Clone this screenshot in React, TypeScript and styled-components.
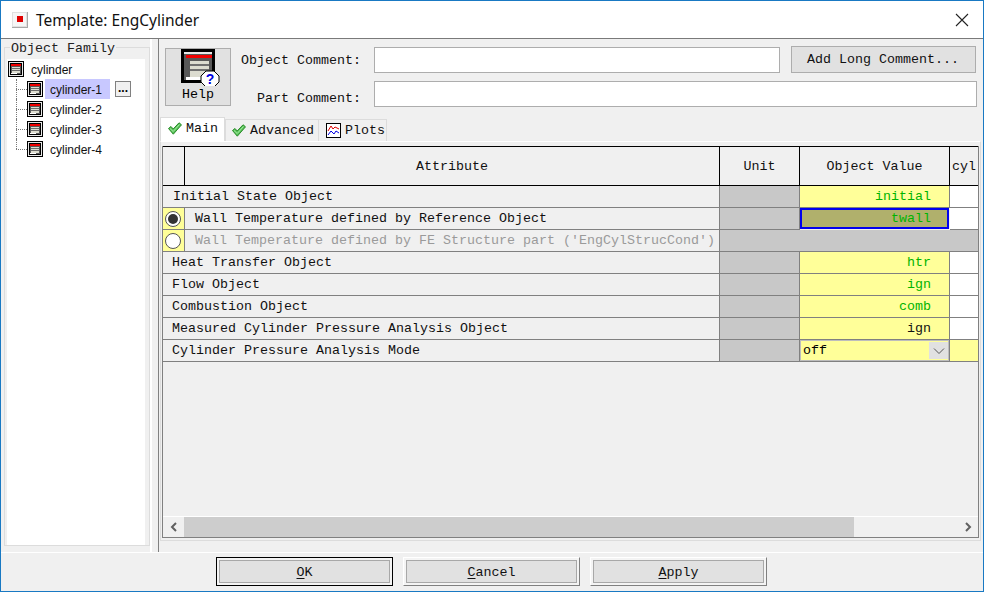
import React from "react";
import styled, { createGlobalStyle } from "styled-components";

const Global = createGlobalStyle`
  html, body { margin: 0; padding: 0; background: #f0f0f0; }
  * { box-sizing: border-box; }
`;

const MONO = `"Liberation Mono", "DejaVu Sans Mono", monospace`;
const UI = `"Noto Sans", "Open Sans", sans-serif`;

const Win = styled.div`
  width: 984px; height: 592px; border: 1px solid #1979c3;
  display: flex; flex-direction: column; background: #f0f0f0;
  font: 13.33px ${MONO}; color: #000; overflow: hidden;
`;
const TitleBar = styled.header`
  height: 38px; background: #fff; display: flex; align-items: center; padding: 0 14px 0 11px;
  border-bottom: 1px solid #7a7a7a; flex: none;
`;
const TitleText = styled.div`
  font: 15.5px ${UI}; margin-left: 8px; flex: 1; color: #111;
`;
const CloseBtn = styled.button`
  width: 14px; height: 14px; padding: 0; border: 0; background: none; display: block; margin-top: 1px;
`;
const Main = styled.div`
  flex: none; display: flex; height: 514px;
  border-bottom: 1px solid #fff;
`;
const Side = styled.aside`
  width: 151px; flex: none; padding: 4px 0 6px 3px; border-right: 2px solid #fff; display: flex;
`;
const Fieldset = styled.fieldset`
  margin: 0; flex: 1; border: 1px solid #dcdcdc; padding: 7px 3px 0 2px; min-width: 0; display: flex;
`;
const Legend = styled.legend`
  padding: 0 1px; margin-left: 3px; height: 9px; color: #222;
  font: 13.33px/11px ${MONO};
`;
const Tree = styled.div`
  flex: 1; background: #fff; margin-right: 1px;
`;
const TreeRow = styled.div<{ $child?: boolean; $last?: boolean }>`
  height: 20px; display: flex; align-items: center; position: relative;
  padding-left: ${p => (p.$child ? 20 : 1)}px;
  font: 12px "Liberation Sans", Arial, sans-serif; color: #111;
  ${p => p.$child && `
    &::before { content: ""; position: absolute; left: 9px; width: 11px; top: 10px; border-top: 1px dotted #777; }
    &::after { content: ""; position: absolute; left: 9px; top: 0; height: ${p.$last ? 10 : 20}px; border-left: 1px dotted #777; }
  `}
`;
const TreeLabel = styled.span<{ $selected?: boolean }>`
  height: 20px; display: flex; align-items: center; padding: 2px 8px 0 5px; margin-left: 2px;
  background: ${p => (p.$selected ? "#c8c8ff" : "transparent")};
`;
const MoreBtn = styled.button`
  width: 16px; height: 16px; margin-left: 5px; border: 1px solid #808080; background: #f0f0f0; padding: 0 0 3px;
  font: bold 12px/12px "Liberation Sans", sans-serif; color: #000;
`;
const Divider = styled.div`
  width: 1px; background: #808080; margin-left: 6px; flex: none;
`;
const Right = styled.section`
  flex: 1; min-width: 0; display: flex; flex-direction: column; padding: 7px 2px 11px 1px;
`;
const TopArea = styled.div`
  display: flex; padding-left: 5px; height: 71px; flex: none;
`;
const HelpBtn = styled.button`
  width: 66px; height: 58px; margin-top: 2px; background: #e1e1e1; border: 1px solid #adadad; padding: 0;
  display: flex; flex-direction: column; align-items: center; font: 13.33px ${MONO}; color: #000;
`;
const HelpText = styled.span`
  line-height: 14px; margin-top: 2px;
`;
const Comments = styled.div`
  display: grid; grid-template-columns: 133px 406px 11px 185px; grid-template-rows: 26px 26px;
  row-gap: 8px; margin-left: 10px; align-items: center; margin-top: 1px; align-self: flex-start;
`;
const FieldLabel = styled.label<{ $low?: boolean }>`
  text-align: right; padding: ${p => (p.$low ? "8px" : "0")} 13px 0 0; white-space: pre; color: #111;
`;
const TextBox = styled.input<{ $wide?: boolean }>`
  height: 26px; border: 1px solid #adadad; background: #fff; outline: none; padding: 0 4px;
  ${p => p.$wide && "grid-column: 2 / span 3; width: 603px;"}
`;
const PushBtn = styled.button`
  grid-column: 4; height: 27px; margin-top: -1px; background: #e1e1e1; border: 1px solid #adadad;
  font: 13.33px ${MONO}; color: #111; padding: 0 1px 0 0;
`;
const Tabs = styled.div`
  display: flex; align-items: flex-end; height: 24px; flex: none;
`;
const Tab = styled.div<{ $active?: boolean; $w: number; $pad: number }>`
  width: ${p => p.$w}px; height: ${p => (p.$active ? 24 : 22)}px; display: flex; align-items: center;
  padding: 0 0 ${p => (p.$active ? 2 : 0)}px ${p => p.$pad}px; gap: 4px; white-space: pre;
  background: ${p => (p.$active ? "#fff" : "#f0f0f0")};
  border: 1px solid #dcdcdc; border-bottom: 0; margin-right: ${p => (p.$active ? 0 : -1)}px;
  color: #111;
`;
const Pane = styled.div`
  flex: 1; min-height: 0; border: 1px solid #dcdcdc; border-top: 1px solid #fff;
  padding: 4px 1px 2px 1px; display: flex;
`;
const Frame = styled.div`
  flex: 1; min-width: 0; display: flex; flex-direction: column; border: 1px solid #808080; border-top: 0;
`;
const Grid = styled.div`
  flex: 1; min-height: 0; display: grid; grid-template-columns: 22px 535px 80px 150px 28px;
  grid-template-rows: 40px repeat(8, 22px); align-content: start; overflow: hidden;
  background: #f0f0f0;
`;
const Head = styled.div<{ $lastCol?: boolean }>`
  border-top: 1px solid #000; border-bottom: 1px solid #000;
  border-right: ${p => (p.$lastCol ? "0" : "1px solid #000")};
  display: flex; align-items: center; justify-content: center; overflow: hidden; color: #111;
`;
const Attr = styled.div<{ $span?: number; $pad?: number; $muted?: boolean }>`
  grid-column: span ${p => p.$span ?? 1};
  border-bottom: 1px solid #808080; border-right: 1px solid #808080;
  padding-left: ${p => p.$pad ?? 9}px; display: flex; align-items: center; white-space: pre; overflow: hidden;
  color: ${p => (p.$muted ? "#9a9a9a" : "#111")};
`;
const RadioCell = styled.div`
  background: #ffff99; border-bottom: 1px solid #808080; border-right: 1px solid #808080;
  display: flex; align-items: center; justify-content: center; padding-right: 1px;
`;
const Radio = styled.span<{ $on?: boolean }>`
  width: 16px; height: 16px; border-radius: 50%; border: 1px solid #555; background: #fff; display: flex;
  align-items: center; justify-content: center;
  &::after { content: ""; width: 10px; height: 10px; border-radius: 50%; background: ${p => (p.$on ? "#333" : "transparent")}; }
`;
const Gray = styled.div<{ $span?: number }>`
  grid-column: span ${p => p.$span ?? 1}; background: #c8c8c8; border-bottom: 1px solid #808080;
  border-right: ${p => (p.$span ? "0" : "1px solid #808080")};
`;
const Value = styled.div<{ $green?: boolean }>`
  background: #ffff99; border-bottom: 1px solid #808080; border-right: 1px solid #808080;
  display: flex; align-items: center; justify-content: flex-end; padding-right: 18px;
  color: ${p => (p.$green ? "#00b400" : "#111")};
`;
const Focused = styled.div`
  background: #b0b06c; border: 2px solid #0000ee; margin-bottom: 1px; margin-right: 1px;
  display: flex; align-items: center; justify-content: flex-end; padding-right: 16px; color: #00b400;
`;
const Blank = styled.div<{ $yellow?: boolean }>`
  background: ${p => (p.$yellow ? "#ffff99" : "#fff")}; border-bottom: 1px solid #808080;
`;
const ComboCell = styled.div`
  background: #ffff99; border-bottom: 1px solid #808080; border-right: 1px solid #808080;
  display: flex; padding: 2px 1px 2px 2px; box-shadow: inset 0 0 0 1px #bdbdbd;
`;
const ComboText = styled.div`
  flex: 1; padding-left: 1px; display: flex; align-items: center;
`;
const ComboArrow = styled.div`
  width: 19px; background: #e1e1e1; display: flex; align-items: center; justify-content: center;
`;
const ScrollBar = styled.div`
  height: 21px; flex: none; display: flex; border-top: 1px solid #fff; background: #f0f0f0; align-items: stretch;
`;
const ScrollEnd = styled.div`
  width: 21px; display: flex; align-items: center; justify-content: center; flex: none;
`;
const Thumb = styled.div`
  width: 670px; background: #cdcdcd; flex: none;
`;
const Track = styled.div`
  flex: 1;
`;
const Footer = styled.footer`
  flex: 1; display: flex; padding: 4px 0 0 215px; gap: 10px; background: #f0f0f0; min-height: 0;
`;
const DlgBtn = styled.button<{ $def?: boolean }>`
  width: 177px; height: 29px; padding: 2px 0 0; font: 13.33px ${MONO}; color: #111;
  background: #e1e1e1;
  border: 1px solid ${p => (p.$def ? "#000" : "#fff")};
  border-right-color: ${p => (p.$def ? "#000" : "#808080")};
  border-bottom-color: ${p => (p.$def ? "#000" : "#808080")};
  box-shadow: inset 0 0 0 3px #f4f4f4;
  outline: 1px solid #a8a8a8; outline-offset: -4px;
  u { text-underline-offset: 2px; }
`;

const ItemIcon = () => (
  <svg width={16} height={16} viewBox="0 0 16 16" shapeRendering="crispEdges" style={{ flex: "none" }}>
    <rect width="16" height="16" fill="#000" />
    <rect x="1" y="1" width="14" height="14" fill="#e8e8e8" />
    <rect x="2" y="2" width="12" height="12" fill="#000" />
    <rect x="3" y="3" width="10" height="10" fill="#585858" />
    <rect x="3" y="3" width="10" height="2" fill="#f00000" />
    <rect x="4" y="6" width="8" height="6" fill="#ddddd0" />
    <rect x="4" y="7" width="8" height="1" fill="#6a6a6a" />
    <rect x="4" y="9" width="8" height="1" fill="#6a6a6a" />
    <rect x="3" y="12" width="6" height="1" fill="#fff" />
  </svg>
);

const HelpIcon = () => (
  <svg width="40" height="37" viewBox="0 0 40 37" style={{ flex: "none", marginLeft: 6 }} shapeRendering="crispEdges">
    <rect x="0" y="0" width="34" height="34" fill="#000" />
    <rect x="3" y="3" width="28" height="28" fill="#585858" />
    <rect x="3" y="3" width="28" height="2" fill="#e8e8e8" />
    <rect x="5" y="6" width="26" height="3" fill="#f00000" />
    <rect x="9" y="12" width="19" height="17" fill="#dcdcd0" />
    <rect x="9" y="15" width="19" height="2" fill="#707070" />
    <rect x="9" y="20" width="19" height="2" fill="#707070" />
    <rect x="5" y="28" width="16" height="3" fill="#fff" />
    <path d="M25 22 h8 l5 5 v6 l-5 5 h-8 l-5 -5 v-6 z" fill="#fff" stroke="#000" shapeRendering="auto" />
    <text x="29" y="35" textAnchor="middle" fontFamily="Liberation Sans" fontWeight="700" fontSize="14" fill="#0000e0">?</text>
  </svg>
);

const Check = () => (
  <svg width="14" height="13" viewBox="0 0 14 13" style={{ flex: "none" }}>
    <path d="M0.5 6.5 L3 4.5 L5.2 7 L11 0.8 L13.5 2.8 L5.3 12.2 Z" fill="#55c055" stroke="#2a8a2a" strokeWidth="1" />
    <path d="M2 6.5 L5.2 9.5 L11.5 2.5" fill="none" stroke="#a8eca8" strokeWidth="1" />
  </svg>
);

const PlotIcon = () => (
  <svg width="15" height="15" viewBox="0 0 15 15" style={{ flex: "none" }} shapeRendering="crispEdges">
    <rect x="0.5" y="0.5" width="14" height="14" fill="#fff" stroke="#000" />
    <path d="M2 8 L5 3 L7 6 L9 4 L13 6" fill="none" stroke="#e00000" shapeRendering="auto" />
    <path d="M2 12 L5 8 L8 11 L10 8 L13 10" fill="none" stroke="#0000e0" shapeRendering="auto" />
  </svg>
);

const Chev = ({ d }: { d: "l" | "r" }) => (
  <svg width="8" height="10" viewBox="0 0 8 10">
    <path d={d === "l" ? "M6 1 L2 5 L6 9" : "M2 1 L6 5 L2 9"} fill="none" stroke="#606060" strokeWidth="2" />
  </svg>
);

const rows = [
  { label: "Heat Transfer Object", v: "htr", g: true },
  { label: "Flow Object", v: "ign", g: true },
  { label: "Combustion Object", v: "comb", g: true },
  { label: "Measured Cylinder Pressure Analysis Object", v: "ign", g: false },
];

export default function App() {
  return (
    <Win>
      <Global />
      <TitleBar>
        <svg width="16" height="16" viewBox="0 0 16 16" shapeRendering="crispEdges">
          <rect width="16" height="16" fill="#a8a8a8" />
          <rect width="15" height="15" fill="#e0e0e0" />
          <rect x="1" y="1" width="13" height="13" fill="#f6f6f6" />
          <rect x="5" y="4" width="6" height="6" fill="#e00000" />
        </svg>
        <TitleText>Template: EngCylinder</TitleText>
        <CloseBtn aria-label="Close">
          <svg width="14" height="14" viewBox="0 0 14 14">
            <path d="M1 1 L13 13 M13 1 L1 13" stroke="#222" strokeWidth="1.1" />
          </svg>
        </CloseBtn>
      </TitleBar>
      <Main>
        <Side>
          <Fieldset>
            <Legend>Object Family</Legend>
            <Tree>
              <TreeRow>
                <ItemIcon />
                <TreeLabel>cylinder</TreeLabel>
              </TreeRow>
              <TreeRow $child>
                <ItemIcon />
                <TreeLabel $selected>cylinder-1</TreeLabel>
                <MoreBtn>...</MoreBtn>
              </TreeRow>
              <TreeRow $child><ItemIcon /><TreeLabel>cylinder-2</TreeLabel></TreeRow>
              <TreeRow $child><ItemIcon /><TreeLabel>cylinder-3</TreeLabel></TreeRow>
              <TreeRow $child $last><ItemIcon /><TreeLabel>cylinder-4</TreeLabel></TreeRow>
            </Tree>
          </Fieldset>
        </Side>
        <Divider />
        <Right>
          <TopArea>
            <HelpBtn>
              <HelpIcon />
              <HelpText>Help</HelpText>
            </HelpBtn>
            <Comments>
              <FieldLabel>Object Comment:</FieldLabel>
              <TextBox />
              <span />
              <PushBtn>Add Long Comment...</PushBtn>
              <FieldLabel $low>Part Comment:</FieldLabel>
              <TextBox $wide />
            </Comments>
          </TopArea>
          <Tabs>
            <Tab $active $w={65} $pad={7}><Check />Main</Tab>
            <Tab $w={94} $pad={6}><Check />Advanced</Tab>
            <Tab $w={69} $pad={7}><PlotIcon />Plots</Tab>
          </Tabs>
          <Pane>
            <Frame>
              <Grid>
                <Head />
                <Head>Attribute</Head>
                <Head>Unit</Head>
                <Head>Object Value</Head>
                <Head $lastCol>cyl</Head>

                <Attr $span={2} $pad={10}>Initial State Object</Attr>
                <Gray />
                <Value $green>initial</Value>
                <Blank />

                <RadioCell><Radio $on /></RadioCell>
                <Attr $pad={10}>Wall Temperature defined by Reference Object</Attr>
                <Gray />
                <Focused>twall</Focused>
                <Blank />

                <RadioCell><Radio /></RadioCell>
                <Attr $pad={10} $muted>Wall Temperature defined by FE Structure part ('EngCylStrucCond')</Attr>
                <Gray $span={3} />

                {rows.map(r => (
                  <React.Fragment key={r.label + r.v}>
                    <Attr $span={2}>{r.label}</Attr>
                    <Gray />
                    <Value $green={r.g}>{r.v}</Value>
                    <Blank />
                  </React.Fragment>
                ))}

                <Attr $span={2}>Cylinder Pressure Analysis Mode</Attr>
                <Gray />
                <ComboCell>
                  <ComboText>off</ComboText>
                  <ComboArrow>
                    <svg width="12" height="8" viewBox="0 0 12 8">
                      <path d="M1 1.5 L6 6.5 L11 1.5" fill="none" stroke="#555" />
                    </svg>
                  </ComboArrow>
                </ComboCell>
                <Blank $yellow />
              </Grid>
              <ScrollBar>
                <ScrollEnd><Chev d="l" /></ScrollEnd>
                <Thumb />
                <Track />
                <ScrollEnd><Chev d="r" /></ScrollEnd>
              </ScrollBar>
            </Frame>
          </Pane>
        </Right>
      </Main>
      <Footer>
        <DlgBtn $def><u>O</u>K</DlgBtn>
        <DlgBtn><u>C</u>ancel</DlgBtn>
        <DlgBtn><u>A</u>pply</DlgBtn>
      </Footer>
    </Win>
  );
}
